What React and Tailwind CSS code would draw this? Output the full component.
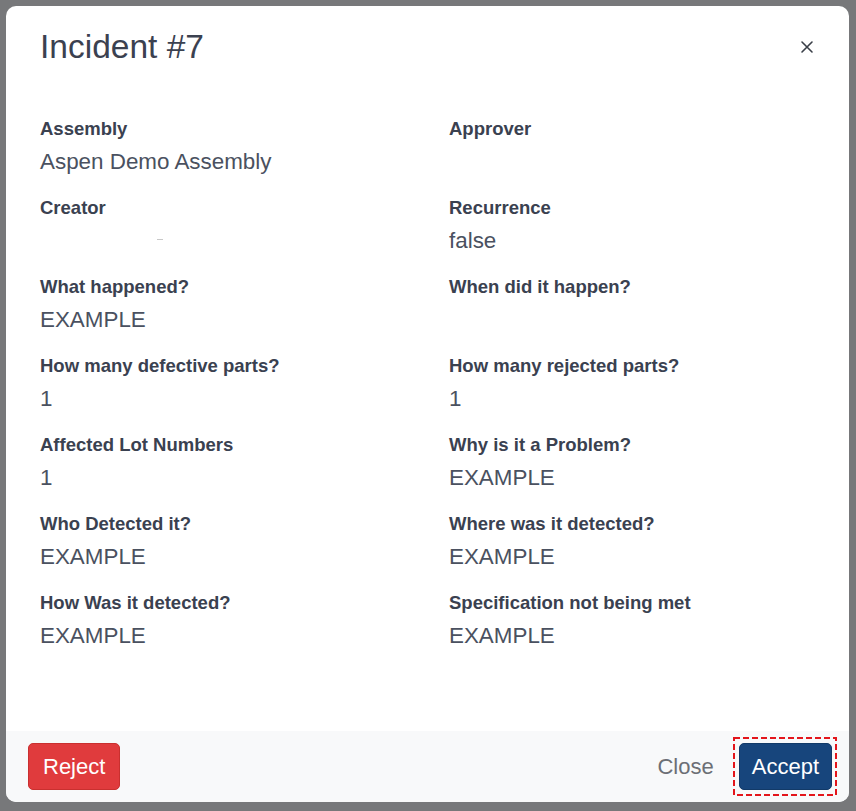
const fields = [
  ['Assembly', 'Aspen Demo Assembly', 'Approver', ''],
  ['Creator', null, 'Recurrence', 'false'],
  ['What happened?', 'EXAMPLE', 'When did it happen?', ''],
  ['How many defective parts?', '1', 'How many rejected parts?', '1'],
  ['Affected Lot Numbers', '1', 'Why is it a Problem?', 'EXAMPLE'],
  ['Who Detected it?', 'EXAMPLE', 'Where was it detected?', 'EXAMPLE'],
  ['How Was it detected?', 'EXAMPLE', 'Specification not being met', 'EXAMPLE'],
];

function Field({ label, value }) {
  return (
    <div className="flex flex-col">
      <div className="text-[18.5px] leading-[24px] font-bold text-[#3a4150]">{label}</div>
      <div className="mt-[6px] h-[30px] text-[22.4px] leading-[30px] text-[#4a5160]">
        {value === null ? (
          <div className="ml-[117px] mt-[13px] w-[6px] h-[1px] bg-[#c8c8c8]" />
        ) : (
          value
        )}
      </div>
    </div>
  );
}

export default function App() {
  return (
    <div
      className="w-[856px] h-[811px] bg-[#77787a] pt-[6px] pl-[6px]"
      style={{ fontFamily: '"Liberation Sans", Arial, sans-serif' }}
    >
      <div className="w-[843px] h-[796px] bg-white rounded-[10px] overflow-hidden flex flex-col">
        {/* Header */}
        <div className="flex items-center justify-between pl-[34px] pr-[34px] pt-[21px]">
          <h2 className="text-[33.5px] leading-[40px] text-[#3b4150]">Incident #7</h2>
          <svg width="14" height="14" viewBox="0 0 14 14" className="mr-[1px]">
            <path d="M2 2 L12 12 M12 2 L2 12" stroke="#3a3f48" strokeWidth="1.6" strokeLinecap="round" />
          </svg>
        </div>

        {/* Body */}
        <div className="flex-1 px-[34px] pt-[50px]">
          <div className="grid grid-cols-[409px_1fr] gap-y-[19px]">
            {fields.map(([l1, v1, l2, v2], i) => (
              <div key={i} className="contents">
                <Field label={l1} value={v1} />
                <Field label={l2} value={v2} />
              </div>
            ))}
          </div>
        </div>

        {/* Footer */}
        <div className="h-[71px] bg-[#f8f9fa] flex items-center justify-between pl-[22px] pr-[17px]">
          <button className="h-[47px] px-[14px] rounded-[5px] bg-[#e03b3d] text-white text-[22px] border border-[#c9302f]">
            Reject
          </button>
          <div className="flex items-center gap-[25px]">
            <span className="text-[22px] text-[#6c6f75]">Close</span>
            <div className="relative">
              <button className="h-[47px] px-[12px] rounded-[5px] bg-[#17457c] text-white text-[22px] border border-[#123a68]">
                Accept
              </button>
              <svg
                className="absolute -left-[6px] -top-[6px] pointer-events-none"
                width="104"
                height="59"
                viewBox="0 0 104 59"
              >
                <rect x="1" y="1" width="102" height="57" fill="none" stroke="#e3151b" strokeWidth="2" strokeDasharray="6 3" />
              </svg>
            </div>
          </div>
        </div>
      </div>
    </div>
  );
}
